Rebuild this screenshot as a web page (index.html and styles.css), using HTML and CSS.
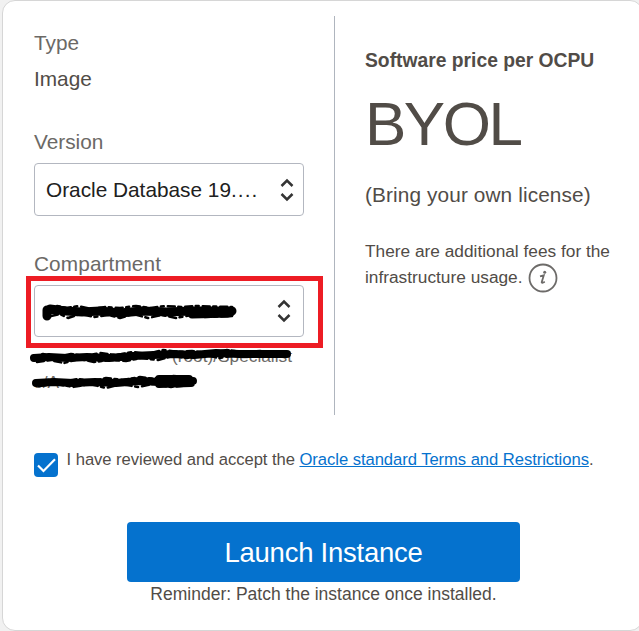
FILE: index.html
```html
<!DOCTYPE html>
<html lang="en">
<head>
<meta charset="utf-8">
<title>Launch Instance</title>
<link rel="stylesheet" href="styles.css">
</head>
<body>
<main class="card">
  <div class="columns">
    <section class="details">
      <div class="label">Type</div>
      <div class="value">Image</div>
      <div class="label version-label">Version</div>
      <div class="select">
        <span class="select-text">Oracle Database 19<span class="dots">....</span></span>
        <svg class="chevrons" width="14" height="24" viewBox="0 0 14 24"><path d="M1.500 8 7 2.500l5.500 5.500M1.500 16 7 21.500l5.500-5.500"/></svg>
      </div>
      <div class="label compartment-label">Compartment</div>
      <div class="highlight">
        <div class="select compartment">
          <svg class="scribble" width="196" height="22" viewBox="0 0 196 22">
            <path class="thick" d="M5 10 5 16M8 9 24 11 40 12 58 11 78 13 100 11 125 12 150 11 190 11M150 14 188 13"/>
            <path class="rough" d="M5 9 15 6 25 8 36 6 50 9 64 7 78 8 94 6 109 8 123 6 139 7 154 6 190 7M9 16 18 14 26 18 38 14 52 17 67 15 78 18 91 14 106 18 120 15 134 18 149 15 163 17 190 16"/>
          </svg>
          <svg class="chevrons" width="14" height="24" viewBox="0 0 14 24"><path d="M1.500 8 7 2.500l5.500 5.500M1.500 16 7 21.500l5.500-5.500"/></svg>
        </div>
      </div>
      <div class="path">
        <span class="path-text">(root)/Specialist</span>
        <span class="path-text path-second">s/A</span>
        <svg class="path-scribble" width="266" height="50" viewBox="0 0 266 50">
          <path class="thick" d="M5 15 20 14 38 15 58 14 80 15 104 13 125 12 145 11 165 12 187 10 210 11 235 11 258 11"/>
          <path class="rough" d="M3 14 14 11 27 14 42 11 56 13 71 10 87 12 104 9 118 11 134 7 149 9 163 8 180 10 198 7 214 9 231 8 246 10 260 10M8 19 21 17 35 20 50 16 65 19 82 17 97 18 112 15 129 17 144 13 158 15 175 12 190 15 209 12 226 13 244 12 260 12"/>
          <path class="thick" d="M7 40 25 39 44 40 66 39 87 40 110 38 134 39 164 38M130 36 160 36M130 41 162 40"/>
          <path class="rough" d="M6 39 20 37 33 39 49 36 64 38 77 35 94 37 111 34 126 36 144 33 158 34 165 38M10 43 28 41 44 44 61 41 77 45 92 41 109 44 124 41 142 44 164 42"/>
        </svg>
      </div>
    </section>
    <section class="pricing">
      <h2 class="price-title">Software price per OCPU</h2>
      <div class="price">BYOL</div>
      <div class="license">(Bring your own license)</div>
      <p class="fees">There are additional fees for the<br>infrastructure usage.<svg class="info" width="30" height="30" viewBox="0 0 30 30"><circle cx="15" cy="15" r="13.500"/><path d="M12 13.300 15.800 12.300 13.700 19.200Q13.500 20.600 16.800 18.800"/><circle class="dot" cx="16.700" cy="9.200" r="1.500"/></svg></p>
    </section>
  </div>
  <div class="terms">
    <span class="checkbox"><svg width="24" height="24" viewBox="0 0 24 24"><path d="M4 12.500 9.500 18 21 6.300"/></svg></span>
    <span class="terms-text">I have reviewed and accept the <a href="#">Oracle standard Terms and Restrictions</a>.</span>
  </div>
  <button class="launch">Launch Instance</button>
  <div class="reminder">Reminder: Patch the instance once installed.</div>
</main>
</body>
</html>
```

FILE: styles.css
```css
* { box-sizing: border-box; }
body {
  margin: 0;
  background: #f1f1f1;
  font-family: "Liberation Sans", Arial, sans-serif;
  color: #514c47;
  overflow: hidden;
}
.card {
  width: 641px;
  height: 631px;
  margin-left: 2px;
  padding: 15px 0 0 31px;
  background: #fff;
  border: 1px solid #d6d6d6;
  border-radius: 13px;
}
.columns { display: flex; height: 399px; }
.details {
  width: 301px;
  border-right: 1px solid #afb5be;
  padding-top: 14px;
}
.label, .value { font-size: 20.8px; line-height: 26px; }
.label { color: #6b6966; }
.value { margin-top: 10px; }
.version-label { margin-top: 37px; }
.select {
  width: 270px;
  height: 53px;
  margin-top: 8px;
  padding: 0 9px 0 11px;
  display: flex;
  align-items: center;
  justify-content: space-between;
  border: 1px solid #b3b7c0;
  border-radius: 4px;
  background: #fff;
}
.select-text { font-size: 20.8px; color: #202020; white-space: nowrap; }
.dots { letter-spacing: 1.1px; }
.chevrons path { fill: none; stroke: #343434; stroke-width: 2.500; }
.compartment-label { margin-top: 35px; letter-spacing: 0.1px; }
.highlight {
  width: 297px;
  height: 72px;
  margin: -1px 0 0 -8px;
  padding: 4px 3px;
  border: 5px solid #ed1c24;
}
.highlight .compartment { margin: 0; height: 52px; padding: 0 12px 0 7px; }
.scribble path, .path-scribble path { fill: none; stroke: #000; stroke-linecap: round; stroke-linejoin: round; }
.scribble .thick { stroke-width: 9; }
.path-scribble .thick { stroke-width: 8; }
.rough { stroke-width: 2.500; stroke-dasharray: 7 3.500 3 4; }
.path {
  position: relative;
  width: 266px;
  height: 50px;
  margin: -5px 0 0 -5px;
  font-size: 17.3px;
  line-height: 26px;
  color: #6b6966;
  display: flex;
  flex-direction: column;
}
.path-text { align-self: flex-end; margin-right: 3px; }
.path-second { align-self: flex-start; margin-left: 5px; }
.path-scribble { position: absolute; left: 0; top: 0; }
.pricing { padding: 32px 0 0 30px; }
.price-title { margin: 0; font-size: 19.3px; line-height: 26px; white-space: nowrap; }
.price { margin-top: 14px; font-size: 62px; line-height: 72px; letter-spacing: -2.500px; }
.license { margin-top: 22px; font-size: 20.8px; line-height: 26px; letter-spacing: 0.110px; white-space: nowrap; }
.fees { margin: 30px 0 0; font-size: 17.3px; line-height: 26px; white-space: nowrap; }
.info { margin: -10px 0 -10px 5px; vertical-align: -9px; position: relative; top: -9px; fill: none; stroke: #6d6b69; stroke-width: 1.800; }
.info .dot { fill: #6d6b69; stroke: none; }
.terms { display: flex; margin-top: 30px; height: 34px; }
.checkbox { width: 24px; height: 24px; margin-top: 8px; border-radius: 4px; background: #0572ce; }
.checkbox svg { display: block; fill: none; stroke: #fff; stroke-width: 2.200; }
.terms-text { margin: 1px 0 0 8.6px; font-size: 16.640px; letter-spacing: -0.060px; line-height: 28px; white-space: nowrap; }
.terms a { color: #0572ce; text-decoration: underline; }
.launch {
  display: block;
  width: 393px;
  height: 60px;
  margin: 43px 0 0 93px;
  padding: 1px 0 0;
  border: 0;
  border-radius: 4px;
  background: #0572ce;
  color: #fff;
  font-family: inherit;
  font-size: 27.500px;
  letter-spacing: -0.250px;
}
.reminder { width: 393px; margin-left: 93px; text-align: center; font-size: 17.500px; line-height: 24px; }
```
